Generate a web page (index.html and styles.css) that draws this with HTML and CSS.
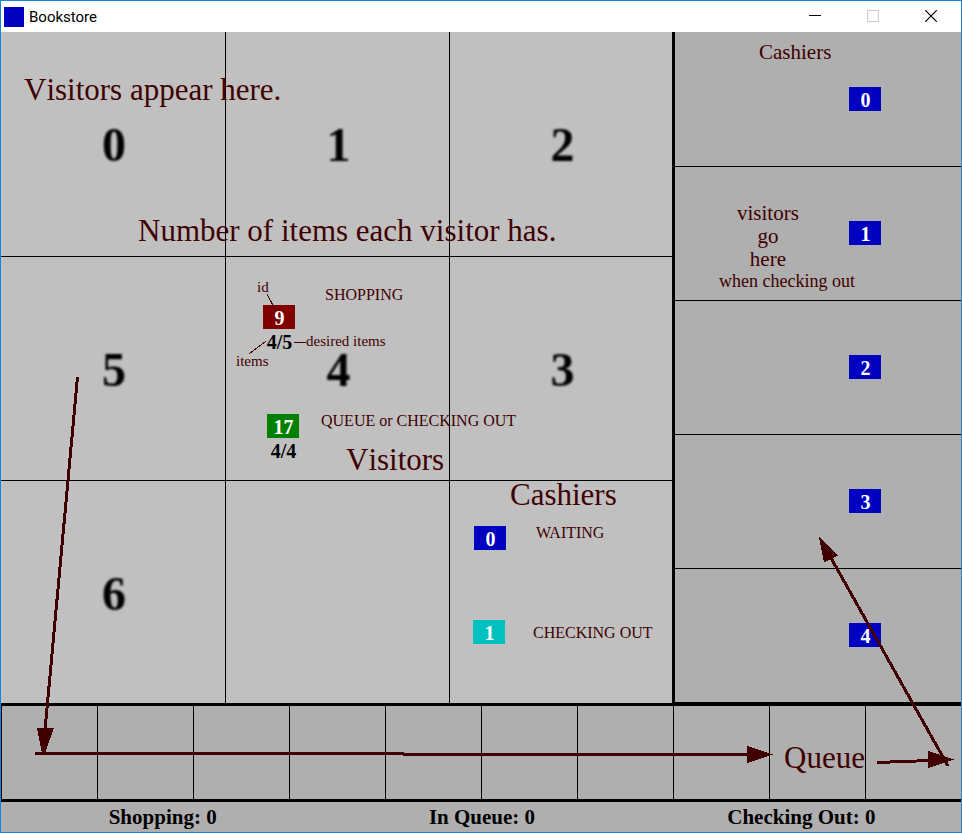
FILE: index.html
```html
<!DOCTYPE html>
<html lang="en">
<head>
<meta charset="utf-8">
<title>Bookstore</title>
<link rel="stylesheet" href="styles.css">
</head>
<body>
<div class="window">
  <header class="titlebar">
    <span class="app-icon"></span>
    <h1 class="app-title">Bookstore</h1>
    <div class="controls">
      <button type="button" aria-label="Minimize"><svg width="12" height="12"><path d="M0 5.5H12" stroke="#000"/></svg></button>
      <button type="button" aria-label="Maximize" disabled><svg width="12" height="12"><path d="M.5 .5H11.5V11.5H.5Z" stroke="#ccc"/></svg></button>
      <button type="button" aria-label="Close"><svg class="smooth" width="12" height="12"><path d="M0 0L12 12M12 0L0 12" stroke="#000" stroke-width="1.2"/></svg></button>
    </div>
  </header>

  <main class="store">
    <section class="floor">
      <div class="area"><span>0</span></div>
      <div class="area"><span>1</span></div>
      <div class="area"><span>2</span></div>
      <div class="area"><span>5</span></div>
      <div class="area"><span>4</span></div>
      <div class="area"><span>3</span></div>
      <div class="area"><span>6</span></div>
      <div class="area"></div>
      <div class="area"></div>
    </section>
    <aside class="desks">
      <div class="desk"><span class="badge">0</span></div>
      <div class="desk"><span class="badge">1</span></div>
      <div class="desk"><span class="badge">2</span></div>
      <div class="desk"><span class="badge">3</span></div>
      <div class="desk"><span class="badge">4</span></div>
    </aside>
  </main>

  <section class="queue">
    <div></div><div></div><div></div><div></div><div></div>
    <div></div><div></div><div></div><div></div><div></div>
  </section>

  <footer class="status">
    <span>Shopping: 0</span>
    <span>In Queue: 0</span>
    <span>Checking Out: 0</span>
  </footer>

  <div class="notes">
    <div class="token token-shopping"><span class="badge red">9</span><span class="count">4/5</span></div>
    <div class="token token-done"><span class="badge green">17</span><span class="count">4/4</span></div>
    <div class="token token-waiting"><span class="badge">0</span></div>
    <div class="token token-busy"><span class="badge cyan">1</span></div>

    <p class="note large n-appear">Visitors appear here.</p>
    <p class="note large n-number">Number of items each visitor has.</p>
    <p class="note large n-visitors">Visitors</p>
    <p class="note large n-cashiers">Cashiers</p>
    <p class="note large n-queue">Queue</p>
    <p class="note medium n-desks">Cashiers</p>
    <p class="note medium n-go">visitors<br>go<br>here</p>
    <p class="note minor n-when">when checking out</p>
    <p class="note small n-shopping">SHOPPING</p>
    <p class="note small n-done">QUEUE or CHECKING OUT</p>
    <p class="note small n-waiting">WAITING</p>
    <p class="note small n-busy">CHECKING OUT</p>
    <p class="note tiny n-id">id</p>
    <p class="note tiny n-desired">desired items</p>
    <p class="note tiny n-items">items</p>

    <svg class="arrows" width="962" height="833" viewBox="0 0 962 833" aria-hidden="true">
      <g class="thin">
        <path d="M267 294L276 311"/>
        <path d="M266 341L249 354"/>
        <path d="M294 342.5H306"/>
      </g>
      <g class="thick">
        <path d="M77.500 377L45 730"/>
        <path d="M35 753.500H404"/>
        <path d="M403 754.500H748"/>
        <path d="M877 762.500L930 760.500"/>
        <path d="M948 766L831 558"/>
      </g>
      <g class="heads">
        <path d="M37 728H54L45 753H42Z"/>
        <path d="M747 746L773 754.500L747 763Z"/>
        <path d="M928 751L954 759.500L928 768Z"/>
        <path d="M819 537L838 555.500L824 562.500Z"/>
      </g>
    </svg>
  </div>
</div>
</body>
</html>
```

FILE: styles.css
```css
* {
  box-sizing: border-box;
}

body {
  margin: 0;
  font-family: "Liberation Serif", "Times New Roman", serif;
}

.window {
  position: relative;
  display: grid;
  grid-template-rows: 31px 21fr 3fr 1fr;
  min-height: 100vh;
  border: 1px solid #1883d7;
  background: #afafaf;
}

/* Title bar */
.titlebar {
  display: flex;
  align-items: center;
  background: #fff;
}

.app-icon {
  width: 20px;
  height: 20px;
  margin: 0 5px 0 3px;
  background: #0000c0;
}

.app-title {
  margin: 0;
  font: 400 15px/20px Roboto, sans-serif;
}

.controls {
  display: flex;
  align-self: stretch;
  margin-left: auto;
  padding-right: 1px;
}

.controls button {
  display: grid;
  place-items: center;
  width: 58px;
  padding: 0 1px 1px 0;
  border: 0;
  background: none;
}

.controls svg {
  fill: none;
  shape-rendering: crispEdges;
}

.controls .smooth {
  shape-rendering: auto;
}

/* Shop floor and cashier desks */
.store {
  display: grid;
  grid-template-columns: 7fr 3fr;
}

.floor {
  display: grid;
  grid-template: repeat(3, 1fr) / repeat(3, 1fr);
  background: #c0c0c0;
}

.area {
  display: grid;
  place-items: center;
  padding: 2px 0 0 2px;
  border: 0 solid #000;
  font-size: 48px;
  font-weight: 700;
  line-height: 48px;
}

.area span {
  filter: blur(1px);
}

.area:not(:nth-child(3n + 1)) {
  border-left-width: 1px;
}

.area:nth-child(n + 4) {
  border-top-width: 1px;
}

.desks {
  display: grid;
  grid-template-rows: repeat(5, 1fr);
  margin-left: -1px;
  border: solid #000;
  border-width: 0 0 2px 3px;
  background: #afafaf;
}

.desk {
  display: flex;
  align-items: center;
  justify-content: flex-end;
  padding-right: 80px;
}

.desk + .desk {
  padding-bottom: 2px;
  border-top: 1px solid #000;
}

.badge {
  display: block;
  width: 32px;
  height: 24px;
  padding-left: 1px;
  background: #0000c0;
  color: #fff;
  font-size: 20px;
  font-weight: 700;
  line-height: 26px;
  text-align: center;
}

.red {
  background: #800000;
}

.green {
  background: #008000;
}

.cyan {
  background: #00c0c0;
}

/* Queue and counters */
.queue {
  display: grid;
  grid-template-columns: repeat(10, 1fr);
  margin-top: -1px;
  border-top: 3px solid #000;
}

.queue div {
  border-left: 1px solid #000;
}

.status {
  display: grid;
  grid-template-columns: repeat(3, 1fr);
  align-items: center;
  margin-top: -1px;
  padding-left: 2px;
  border-top: 3px solid #000;
  font-size: 21px;
  font-weight: 700;
  line-height: 28px;
  text-align: center;
}

/* Annotation layer drawn over the board */
.notes {
  position: absolute;
  inset: -1px;
  overflow: hidden;
  pointer-events: none;
}

.arrows {
  position: absolute;
  top: 0;
  left: 0;
  shape-rendering: crispEdges;
}

.thin {
  stroke: #400000;
}

.thick {
  stroke: #400000;
  stroke-width: 3;
}

.heads {
  fill: #400000;
}

.note,
.token {
  position: absolute;
  margin: 0;
}

.note {
  color: #400000;
  white-space: nowrap;
}

.large {
  font-size: 31px;
  font-kerning: none;
  line-height: 32px;
}

.medium {
  font-size: 21px;
  line-height: 23px;
  text-align: center;
}

.minor {
  font-size: 18px;
  line-height: 20px;
}

.small {
  font-size: 16px;
  line-height: 18px;
}

.tiny {
  font-size: 15px;
  line-height: 18px;
}

.count {
  display: block;
  padding-left: 1px;
  font-size: 20px;
  font-weight: 700;
  line-height: 26px;
  text-align: center;
}

.token-shopping { left: 263px; top: 305px; }
.token-done { left: 267px; top: 414px; }
.token-waiting { left: 474px; top: 526px; }
.token-busy { left: 473px; top: 620px; }

.n-appear { left: 24px; top: 74px; }
.n-number { left: 138px; top: 215px; }
.n-visitors { left: 346px; top: 444px; }
.n-cashiers { left: 510px; top: 479px; }
.n-queue { left: 784px; top: 742px; }
.n-desks { left: 759px; top: 41px; }
.n-go { left: 737px; top: 202px; }
.n-when { left: 719px; top: 271px; }
.n-shopping { left: 325px; top: 286px; }
.n-done { left: 321px; top: 412px; }
.n-waiting { left: 536px; top: 524px; }
.n-busy { left: 533px; top: 624px; }
.n-id { left: 257px; top: 278px; }
.n-desired { left: 306px; top: 332px; }
.n-items { left: 236px; top: 352px; }
```
